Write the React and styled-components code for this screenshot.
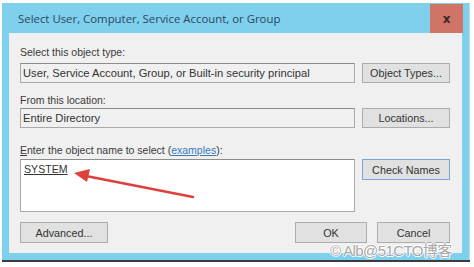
import React from "react";
import styled, { createGlobalStyle } from "styled-components";

const Global = createGlobalStyle`
  html, body { margin: 0; padding: 0; background: #ffffff; }
  body { font-family: "Liberation Sans", Arial, sans-serif; }
`;

const Stage = styled.div`
  position: relative;
  width: 474px;
  height: 267px;
  padding: 3px 0 0 2px;
  box-sizing: border-box;
`;

const Window = styled.div`
  width: 468px;
  background: #7fd0ec;
  border-right: 1px solid #b9dcea;
  box-shadow: 0 2px 0 #3c3c3c;
  padding: 0 7px 7px 7px;
  box-sizing: border-box;
`;

const TitleBar = styled.div`
  height: 30px;
  display: flex;
  align-items: center;
  justify-content: space-between;
`;

const Title = styled.div`
  font-family: "Open Sans", "Noto Sans", sans-serif;
  font-size: 11.4px;
  color: #2d4660;
  padding-left: 9px;
  padding-top: 1px;
`;

const CloseBtn = styled.div`
  width: 33px;
  height: 29px;
  margin-top: 1px;
  margin-right: -1px;
  background: #cf7466;
  display: flex;
  align-items: center;
  justify-content: center;
  color: #3a2a2a;
  font-family: "DejaVu Sans", sans-serif;
  font-weight: bold;
  font-size: 12px;
`;

const Client = styled.div`
  background: #f0f0f0;
  padding: 12px 12px 10px 11px;
  display: flex;
  flex-direction: column;
`;

const Label = styled.div`
  font-size: 10.5px;
  line-height: 14px;
  height: 14px;
  color: #3a3a3a;
  margin-top: ${(p) => p.$top || 0}px;
  margin-bottom: ${(p) => p.$bottom || 0}px;
  u { text-decoration: underline; }
`;

const Link = styled.span`
  color: #3a78c0;
  text-decoration: underline;
`;

const Row = styled.div`
  display: flex;
  justify-content: space-between;
  align-items: flex-start;
  margin-top: ${(p) => p.$top || 0}px;
`;

const Field = styled.div`
  width: 335px;
  height: ${(p) => p.$h || 20}px;
  box-sizing: border-box;
  border: 1px solid #a9a9a9;
  border-top-color: #8c8c8c;
  background: ${(p) => (p.$white ? "#ffffff" : "#f0f0f0")};
  font-size: 11.2px;
  color: #333333;
  padding: 2px 2px;
  line-height: 14px;
  white-space: nowrap;
`;

const NameText = styled.span`
  text-decoration: underline;
  color: #333333;
  font-size: 10.6px;
  padding-left: 1px;
`;

const Button = styled.div`
  width: ${(p) => p.$w || 88}px;
  height: ${(p) => p.$h || 20}px;
  box-sizing: border-box;
  border: 1px solid ${(p) => (p.$default ? "#7aa6d6" : "#acacac")};
  background: #e1e1e1;
  display: flex;
  align-items: center;
  justify-content: center;
  font-size: 10.8px;
  color: #333333;
`;

const Actions = styled.div`
  display: flex;
  gap: 10px;
`;

const Arrow = styled.svg`
  position: absolute;
  left: 0;
  top: 0;
  pointer-events: none;
`;

const Watermark = styled.div`
  position: absolute;
  left: 330px;
  top: 242px;
  font-family: "Liberation Sans", "Noto Sans CJK SC", sans-serif;
  font-size: 15px;
  line-height: 17px;
  color: #a8a8a8;
  text-shadow: -1px 0 #ffffff, 1px 0 #ffffff, 0 1px #ffffff, 0 -1px #ffffff;
  letter-spacing: -0.6px;
  white-space: nowrap;
`;

export default function App() {
  return (
    <Stage>
      <Global />
      <Window>
        <TitleBar>
          <Title>Select User, Computer, Service Account, or Group</Title>
          <CloseBtn>x</CloseBtn>
        </TitleBar>
        <Client>
          <Label $bottom={4}>Select this object type:</Label>
          <Row>
            <Field>User, Service Account, Group, or Built-in security principal</Field>
            <Button>Object Types...</Button>
          </Row>
          <Label $top={10} $bottom={1}>From this location:</Label>
          <Row>
            <Field>Entire Directory</Field>
            <Button>Locations...</Button>
          </Row>
          <Label $top={15} $bottom={2}>
            <u>E</u>nter the object name to select (<Link>examples</Link>):
          </Label>
          <Row>
            <Field $white $h={53}>
              <NameText>SYSTEM</NameText>
            </Field>
            <Button $default $h={21}>Check Names</Button>
          </Row>
          <Row $top={10}>
            <Button $w={88} $h={21}>Advanced...</Button>
            <Actions>
              <Button $w={72} $h={21}>OK</Button>
              <Button $w={73} $h={21}>Cancel</Button>
            </Actions>
          </Row>
        </Client>
      </Window>
      <Arrow width="474" height="267" viewBox="0 0 474 267">
        <line x1="193" y1="197" x2="86" y2="176" stroke="#e0403c" strokeWidth="2.5" strokeLinecap="round" />
        <polygon points="74,173 90,169 87,182" fill="#e0403c" />
      </Arrow>
      <Watermark>© Alb@51CTO博客</Watermark>
    </Stage>
  );
}
